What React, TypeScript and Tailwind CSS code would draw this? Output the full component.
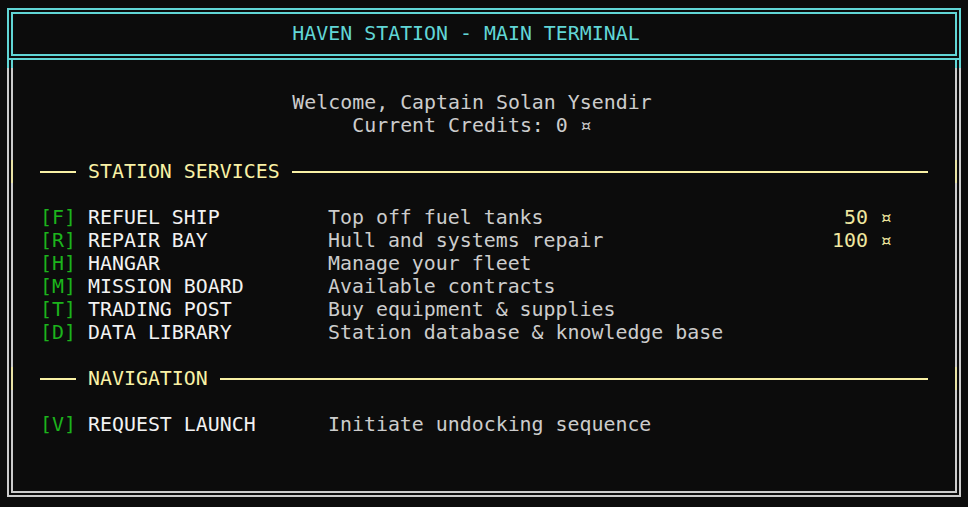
import React from "react";

type Service = {
  key: string;
  name: string;
  desc: string;
  price?: string;
};

const services: Service[] = [
  { key: "F", name: "REFUEL SHIP", desc: "Top off fuel tanks", price: "50 ¤" },
  { key: "R", name: "REPAIR BAY", desc: "Hull and systems repair", price: "100 ¤" },
  { key: "H", name: "HANGAR", desc: "Manage your fleet" },
  { key: "M", name: "MISSION BOARD", desc: "Available contracts" },
  { key: "T", name: "TRADING POST", desc: "Buy equipment & supplies" },
  { key: "D", name: "DATA LIBRARY", desc: "Station database & knowledge base" },
];

const navigation: Service[] = [
  { key: "V", name: "REQUEST LAUNCH", desc: "Initiate undocking sequence" },
];

function SectionHeader({ title }: { title: string }) {
  return (
    <div className="relative flex h-[23px] items-center gap-[12px] pr-[27px]">
      {/* border tint in this row, like the terminal draws it */}
      <div className="absolute left-[-29px] top-0 h-[23px] w-[2px] bg-[#e9e3a6]" />
      <div className="absolute right-[-2px] top-0 h-[23px] w-[2px] bg-[#e9e3a6]" />
      <div className="h-[2px] w-[36px] bg-[#f9f1a5]" />
      <span className="text-[#f9f1a5]">{title}</span>
      <div className="h-[2px] flex-1 bg-[#f9f1a5]" />
    </div>
  );
}

function ServiceRow({ item }: { item: Service }) {
  return (
    <div className="flex h-[23px] items-center pr-[63px]">
      <span className="w-[48px] text-[#1cb41c]">[{item.key}]</span>
      <span className="w-[240px] text-[#f2f2f2]">{item.name}</span>
      <span className="flex-1 text-[#cccccc]">{item.desc}</span>
      {item.price && <span className="text-[#f0e8a0]">{item.price}</span>}
    </div>
  );
}

export default function App() {
  return (
    <div
      className="flex h-[507px] w-full flex-col bg-[#0c0c0c] px-[7px] pb-[10px] pt-[8px] text-[19.9px] leading-[23px] whitespace-pre"
      style={{ fontFamily: "'DejaVu Sans Mono', 'Liberation Mono', monospace" }}
    >
      {/* title box */}
      <div className="flex h-[52px] items-center justify-center border-[6px] border-double border-[#61d6d6] pb-[2px] pr-[36px]">
        <span className="text-[#61d6d6]">HAVEN STATION - MAIN TERMINAL</span>
      </div>

      {/* main box */}
      <div className="relative flex flex-1 flex-col border-[6px] border-t-0 border-double border-[#cccccc] pl-[27px] pt-[31px]">
        <div className="absolute left-[-6px] top-0 h-[8px] w-[6px] border-x-2 border-[#61d6d6]" />
        <div className="absolute right-[-6px] top-0 h-[8px] w-[6px] border-x-2 border-[#61d6d6]" />

        <div className="flex flex-col items-center pr-[51px] text-[#cccccc]">
          <span>Welcome, Captain Solan Ysendir</span>
          <span>Current Credits: 0 ¤</span>
        </div>

        <div className="mt-[23px]">
          <SectionHeader title="STATION SERVICES" />
        </div>
        <div className="mt-[23px] flex flex-col">
          {services.map((s) => (
            <ServiceRow key={s.key} item={s} />
          ))}
        </div>

        <div className="mt-[23px]">
          <SectionHeader title="NAVIGATION" />
        </div>
        <div className="mt-[23px] flex flex-col">
          {navigation.map((s) => (
            <ServiceRow key={s.key} item={s} />
          ))}
        </div>
      </div>
    </div>
  );
}
